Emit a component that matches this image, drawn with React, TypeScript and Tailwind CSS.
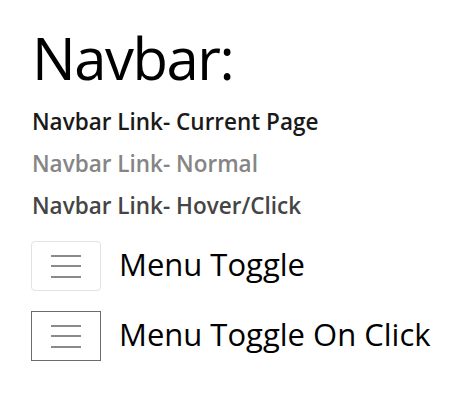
import React from "react";

function Burger({ active }: { active?: boolean }) {
  return (
    <div
      className={
        active
          ? "w-[70px] h-[50px] shrink-0 border border-[#6b6b6b] flex flex-col items-center justify-center gap-[8.5px] bg-white"
          : "w-[70px] h-[50px] shrink-0 border border-[#e2e2e2] rounded-[4px] flex flex-col items-center justify-center gap-[8.5px] bg-white"
      }
    >
      <div className="w-[30px] h-[2px] bg-[#8a8a8a]" />
      <div className="w-[30px] h-[2px] bg-[#8a8a8a]" />
      <div className="w-[30px] h-[2px] bg-[#8a8a8a]" />
    </div>
  );
}

export default function App() {
  return (
    <div
      className="w-[475px] h-[401px] bg-white pl-[32px] pt-[26px]"
      style={{ fontFamily: '"Open Sans", sans-serif' }}
    >
      <h1 className="text-[58px] leading-[64px] tracking-[-0.025em] font-normal text-black">Navbar:</h1>
      <div className="mt-[11px] flex flex-col">
        <div className="text-[22.5px] leading-[42px] font-semibold text-[#1a1a1a]">Navbar Link- Current Page</div>
        <div className="text-[22.5px] leading-[42px] font-semibold text-[#858585]">Navbar Link- Normal</div>
        <div className="text-[22.5px] leading-[42px] font-semibold text-[#454545]">Navbar Link- Hover/Click</div>
      </div>
      <div className="mt-[14px] ml-[-1px] flex flex-col gap-[20px]">
        <div className="flex items-start gap-[18px]">
          <Burger />
          <span className="text-[31px] leading-[46px] text-black">Menu Toggle</span>
        </div>
        <div className="flex items-start gap-[18px]">
          <Burger active />
          <span className="text-[31px] leading-[46px] text-black">Menu Toggle On Click</span>
        </div>
      </div>
    </div>
  );
}
